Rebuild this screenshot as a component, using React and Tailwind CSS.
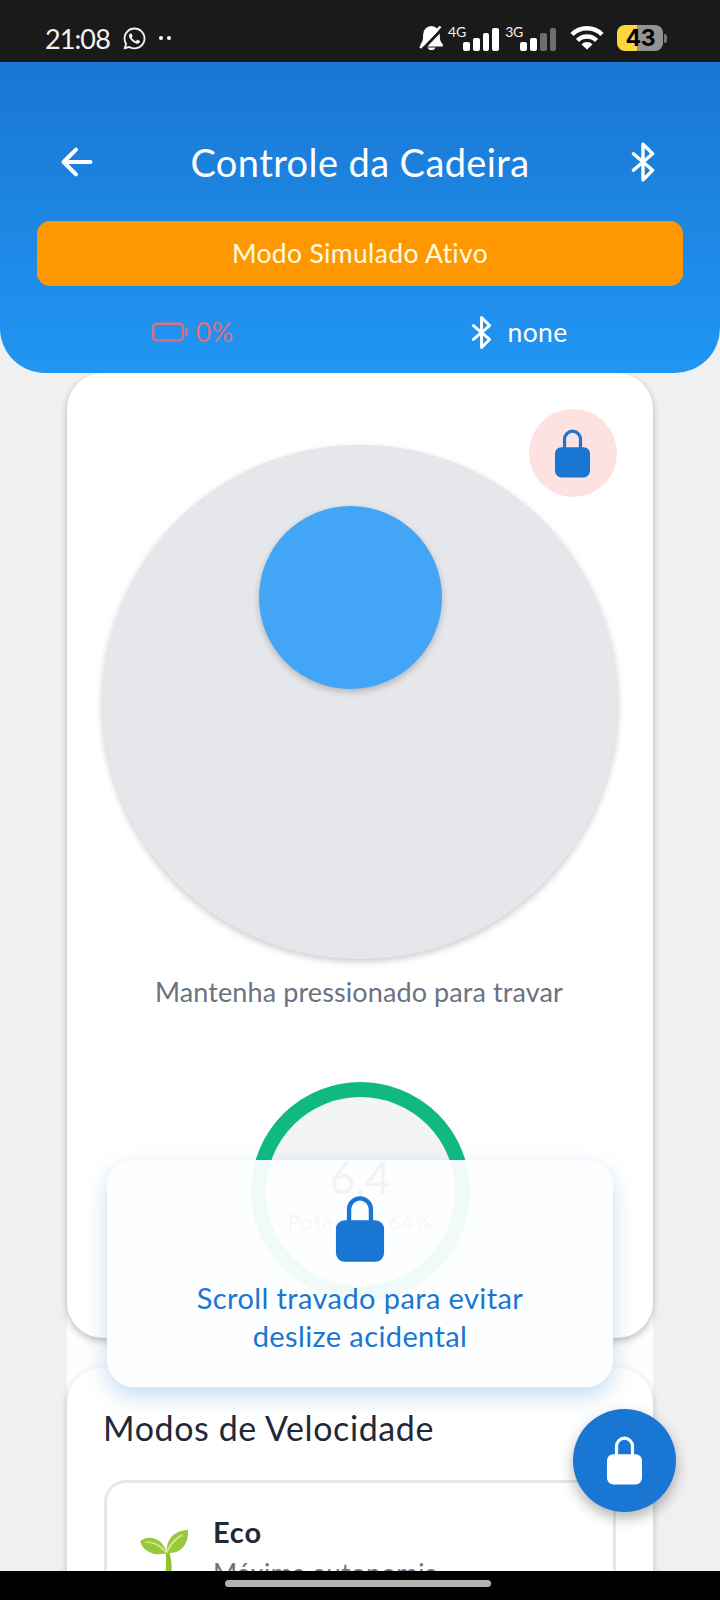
import React from "react";
import { IoArrowBack, IoLockClosed, IoBatteryDeadOutline } from "react-icons/io5";
import { FaWhatsapp } from "react-icons/fa";

function BluetoothIcon({ className }) {
  return (
    <svg className={className} viewBox="0 0 512 512" fill="none" stroke="currentColor" strokeWidth="40" strokeLinecap="round" strokeLinejoin="round">
      <path d="M144 352l224-192L256 48v416l112-112-224-192" />
    </svg>
  );
}

function SignalBars({ label, active }) {
  const heights = ["h-[9px]", "h-[13px]", "h-[18px]", "h-[23px]"];
  return (
    <div className="flex h-[24px]">
      <span className="-mt-[2px] w-[15px] text-[14px] leading-[14px] tracking-[-0.2px] whitespace-nowrap">{label}</span>
      <div className="flex items-end gap-[3px]">
        {heights.map((h, i) => (
          <span key={h} className={`${h} w-[6.8px] rounded-[2px] ${i < active ? "bg-white" : "bg-[#6e6e6e]"}`} />
        ))}
      </div>
    </div>
  );
}

function StatusBar() {
  return (
    <div className="flex h-[62px] shrink-0 items-start bg-[#1a1a1a] pl-[45px] text-[#f2f2f2]">
      <span className="mt-[22px] w-[77px] text-[27px] leading-[33px] tracking-[-0.9px]">21:08</span>
      <FaWhatsapp className="mt-[26px] size-[25px]" />
      <div className="mt-[36px] ml-[11.500px] flex gap-[4.5px]">
        <span className="size-[4px] rounded-full bg-white" />
        <span className="size-[4px] rounded-full bg-white" />
      </div>
      <svg className="mt-[25px] ml-[248px] h-[26px] w-[25px]" viewBox="0 0 25 26">
        <path d="M12.5 1a9 9 0 0 1 8.3 8.7c0 5 .6 7 3 9.300v2.500H1.500v-2.500c2.300-2.300 2.600-4.300 2.600-9.300A8.500 8.500 0 0 1 12.500 1z" fill="#fff" />
        <path d="M8.500 22.500h8c-1 3.400-7 3.400-8 0z" fill="#fff" />
        <path d="M2.500 25.500 24 3" stroke="#1a1a1a" strokeWidth="3" />
        <path d="M1.200 23 21.500 1.500" stroke="#fff" strokeWidth="2.500" />
      </svg>
      <div className="mt-[27px] ml-[4px]"><SignalBars label="4G" active={4} /></div>
      <div className="mt-[27px] ml-[6px]"><SignalBars label="3G" active={2} /></div>
      <svg className="mt-[25px] ml-[14px] h-[25px] w-[34px]" viewBox="0 0 34 25" fill="none" stroke="#fff" strokeWidth="4.500">
        <path d="M2 9.500c8-8.300 22-8.300 30 0" />
        <path d="M7.500 15.500c5-5.300 14-5.300 19 0" />
        <path d="M17 24.500 11.500 19.500c2.500-3.300 8.500-3.300 11 0z" fill="#fff" stroke="none" />
      </svg>
      <div className="mt-[25px] ml-[13px] flex items-center">
        <div className="flex h-[26px] w-[46px] items-center justify-center rounded-[8px] bg-[linear-gradient(90deg,#fbd63f_43%,#939393_43%)] font-[Inter] text-[23px] leading-[26px] font-bold tracking-[-0.3px] text-black">43</div>
        <span className="ml-px h-[9px] w-[3px] rounded-r-full bg-[#777]" />
      </div>
    </div>
  );
}

function Header() {
  return (
    <header className="z-10 flex h-[310.500px] shrink-0 flex-col rounded-b-[45px] bg-linear-to-b from-[#1976d2] to-[#2196f3] px-[37px] text-white">
      <div className="mt-[79.500px] flex h-[40px] items-center justify-between pr-[18px] pl-[18px]">
        <IoArrowBack className="size-[44px]" />
        <h1 className="text-[38px] leading-[40px] tracking-[0.4px]">Controle da Cadeira</h1>
        <BluetoothIcon className="size-[44px]" />
      </div>
      <div className="mt-[39.500px] flex h-[64.500px] items-center justify-center rounded-[13px] bg-[#ff9800] pt-px text-[26.500px] tracking-[0.35px] text-[#fffce0]">
        Modo Simulado Ativo
      </div>
      <div className="mt-[27px] flex h-[39px] items-center">
        <div className="flex w-1/2 items-center gap-[7px] pl-[113.500px] text-[#dc7080]">
          <IoBatteryDeadOutline className="size-[38px]" />
          <span className="pt-px text-[27px] tracking-[0.3px]">0%</span>
        </div>
        <div className="flex w-1/2 items-center gap-[7px] pl-[102.500px]">
          <BluetoothIcon className="size-[37px]" />
          <span className="ml-px pt-px text-[26.500px] tracking-[0.4px]">none</span>
        </div>
      </div>
    </header>
  );
}

function Joystick() {
  return (
    <div className="mt-[72.500px] ml-[34.500px] h-[514px] w-[516px] rounded-full bg-[#e5e7eb] pt-[61px] pl-[157px] shadow-[0_3px_7px_rgba(0,0,0,0.2)]">
      <div className="size-[183px] rounded-full bg-[#42a5f5] shadow-[0_3px_7px_rgba(0,0,0,0.22)]" />
    </div>
  );
}

function Seedling() {
  return (
    <svg className="h-[41px] w-[48px]" viewBox="0 0 48 41">
      <path d="M25 21h4c2.500 9 3 15 2.500 20h-6c1-7 .8-13-.5-20z" fill="#8fc32e" />
      <path d="M0 11c9-7 23-3 27 12-12 4-24-1-27-12z" fill="#97c93c" />
      <path d="M48 0c1 15-8 24-21 23C25 11 34 0 48 0z" fill="#97c93c" />
      <path d="M6 12c8 0 15 4 20 10M42 5c-7 4-12 10-15 17" fill="none" stroke="#dfe98c" strokeWidth="1.700" strokeLinecap="round" />
    </svg>
  );
}

export default function App() {
  return (
    <div className="relative flex h-[1600px] w-[720px] flex-col overflow-hidden bg-[#f0f0f0] font-[Lato,sans-serif]">
      <StatusBar />
      <Header />
      <main className="flex h-[1198.500px] shrink-0 flex-col overflow-hidden px-[67px]">
        <section className="relative h-[965.500px] w-[586px] shrink-0 rounded-[36px] bg-white shadow-[0_3px_7px_rgba(0,0,0,0.25)]">
          <div className="absolute top-[36.500px] right-[36.500px] flex size-[88px] items-center justify-center rounded-full bg-[#fee2e2]">
            <IoLockClosed className="size-[51px] text-[#1976d2]" />
          </div>
          <div className="flex">
            <Joystick />
          </div>
          <p className="mt-[15px] -ml-[2px] text-center text-[27px] leading-[36px] tracking-[0.1px] text-[#6b7280]">Mantenha pressionado para travar</p>
          <div className="mx-auto mt-[71.500px] flex size-[219px] flex-col items-center rounded-full border-[15px] border-[#10b981] bg-[#f3f4f6] pt-[55px]">
            <span className="text-[44px] leading-[50px] text-[#1f2937]">6,4</span>
            <span className="mt-[6px] text-[22px] leading-[28px] tracking-[0.6px] whitespace-nowrap text-[#6b7280]">Potência: 64%</span>
          </div>
        </section>
        <div className="-mt-[36px] w-[586px] shrink-0 bg-[#fdfdfd] pt-[65px]">
          <section className="h-[300px] rounded-t-[36px] bg-white pt-[38px] pr-[37px] pl-[37px] shadow-[0_3px_7px_rgba(0,0,0,0.2)]">
            <h2 className="-ml-px text-[34px] leading-[46px] tracking-[0.6px] text-[#1f2937]">Modos de Velocidade</h2>
            <div className="mt-[29px] flex h-[200px] rounded-[22px] border-[3px] border-[#e5e7eb] bg-white pt-[31px] pl-[32.500px]">
              <div className="mt-[16px]"><Seedling /></div>
              <div className="ml-[25.500px]">
                <p className="text-[29px] leading-[36px] font-bold tracking-[0.8px] text-[#1f2937]">Eco</p>
                <p className="mt-[5px] text-[26px] leading-[36px] tracking-[0.45px] text-[#6b7280]">Máxima autonomia</p>
              </div>
            </div>
          </section>
        </div>
      </main>
      <div className="flex h-[29px] shrink-0 justify-center bg-black pt-[9px] pr-[4px]">
        <div className="h-[7px] w-[266px] rounded-full bg-[#b3b3b3]" />
      </div>
      <div className="absolute top-[1160px] left-[107px] flex h-[227px] w-[506px] flex-col items-center rounded-[27px] bg-[#fdfeff]/95 pt-[34px] shadow-[0_9px_22px_rgba(25,118,210,0.25)]">
        <IoLockClosed className="size-[70px] text-[#1976d2]" />
        <p className="mt-[15px] text-center text-[29px] leading-[37.500px] tracking-[0.4px] text-[#1976d2]">
          Scroll travado para evitar<br />deslize acidental
        </p>
      </div>
      <div className="absolute top-[1409px] left-[573px] flex size-[103px] items-center justify-center rounded-full bg-[#1976d2] shadow-[0_6px_14px_rgba(0,0,0,0.3)]">
        <IoLockClosed className="size-[51px] text-white" />
      </div>
    </div>
  );
}
